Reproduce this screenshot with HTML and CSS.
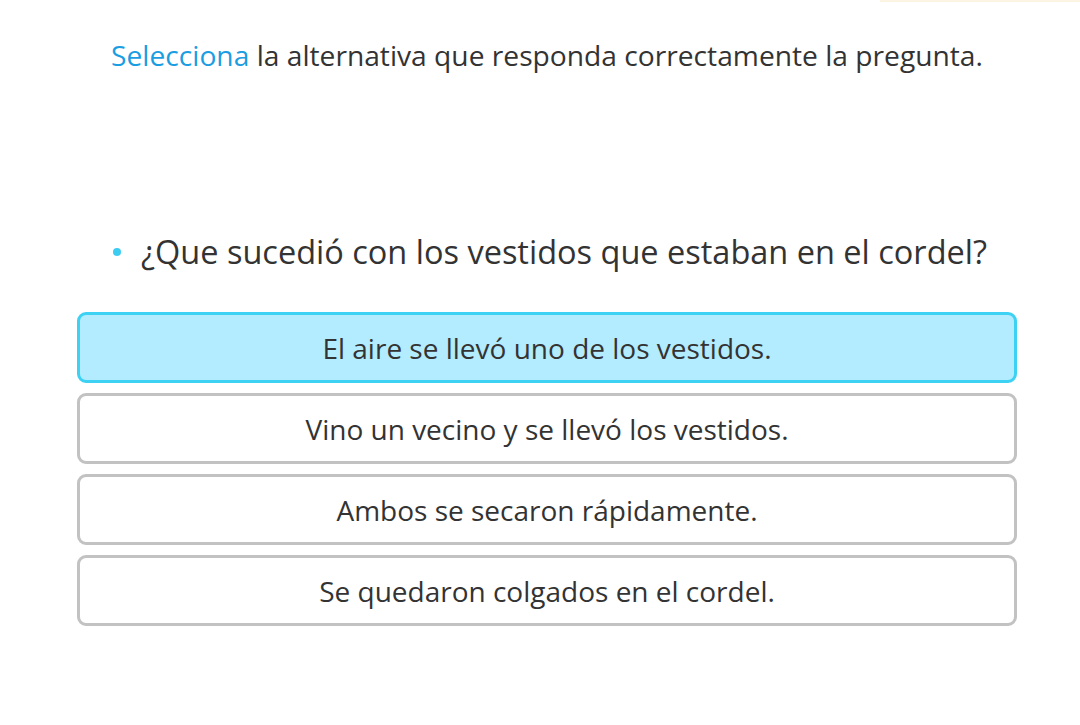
FILE: index.html
```html
<!DOCTYPE html>
<html lang="es">
<head>
<meta charset="utf-8">
<link rel="stylesheet" href="styles.css">
</head>
<body>
<div class="topline"></div>
<main class="page">
  <p class="instruction"><span class="hl">Selecciona</span> la alternativa que responda correctamente la pregunta.</p>
  <ul class="questions">
    <li class="question">¿Que sucedió con los vestidos que estaban en el cordel?</li>
  </ul>
  <div class="options">
    <button class="option selected">El aire se llevó uno de los vestidos.</button>
    <button class="option">Vino un vecino y se llevó los vestidos.</button>
    <button class="option">Ambos se secaron rápidamente.</button>
    <button class="option">Se quedaron colgados en el cordel.</button>
  </div>
</main>
</body>
</html>
```

FILE: styles.css
```css
html, body {
  margin: 0;
  padding: 0;
  background: #ffffff;
}
body {
  font-family: "Open Sans", "Noto Sans", sans-serif;
  color: #333333;
  width: 1080px;
  height: 725px;
  overflow: hidden;
  position: relative;
}
.topline {
  position: absolute;
  top: 0;
  right: 0;
  width: 200px;
  height: 2px;
  background: #fdf5e4;
}
.page {
  width: 940px;
  margin-left: 77px;
  padding-top: 37px;
}
.instruction {
  margin: 0;
  text-align: center;
  font-size: 28.2px;
  line-height: 36px;
}
.hl {
  color: #1b9de2;
}
.questions {
  margin: 157px 0 0 0;
  padding: 0;
  list-style: none;
  text-align: center;
}
.question {
  font-size: 32.5px;
  line-height: 44px;
  display: inline-flex;
  align-items: center;
  gap: 20px;
  margin-left: 6px;
}
.question::before {
  content: "";
  width: 8px;
  height: 8px;
  border-radius: 50%;
  background: #3ccbf1;
}
.options {
  margin-top: 38px;
  display: flex;
  flex-direction: column;
  gap: 10px;
}
.option {
  display: block;
  width: 100%;
  height: 71px;
  box-sizing: border-box;
  border: 3px solid #c2c2c2;
  border-radius: 9px;
  background: #ffffff;
  font-family: inherit;
  font-size: 28px;
  color: #333333;
  text-align: center;
  padding: 0;
}
.option.selected {
  background: #b3ecfe;
  border-color: #3dd1f3;
}
```
